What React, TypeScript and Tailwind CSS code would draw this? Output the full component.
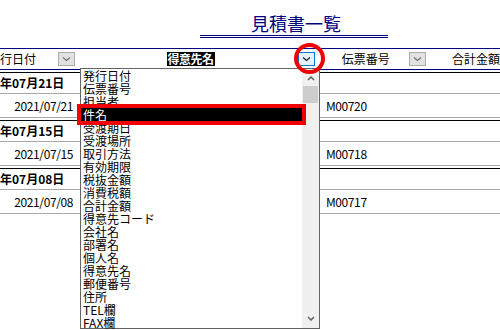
import React from 'react'

const font = "font-['Noto_Sans_CJK_JP','Noto_Sans',sans-serif]"

function Chevron({ color = '#606060' }: { color?: string }) {
  return (
    <svg width="9" height="6" viewBox="0 0 9 6" className="mt-[3px]">
      <path d="M1 1.5 L4.5 4.5 L8 1.5" fill="none" stroke={color} strokeWidth="1.2" />
    </svg>
  )
}

function SortButton({ active = false }: { active?: boolean }) {
  return (
    <div
      className={
        active
          ? 'w-[17px] h-[14px] flex items-start justify-center border border-[#0078d7] bg-[#e5f1fb]'
          : 'w-[17px] h-[14px] flex items-start justify-center border border-[#adadad] bg-[#e1e1e1]'
      }
    >
      <Chevron color={active ? '#1f1f1f' : '#707070'} />
    </div>
  )
}

const groups = [
  { day: '年07月21日', date: '2021/07/21', no: 'M00720' },
  { day: '年07月15日', date: '2021/07/15', no: 'M00718' },
  { day: '年07月08日', date: '2021/07/08', no: 'M00717' },
]

const items = [
  '発行日付',
  '伝票番号',
  '担当者',
  '件名',
  '受渡期日',
  '受渡場所',
  '取引方法',
  '有効期限',
  '税抜金額',
  '消費税額',
  '合計金額',
  '得意先コード',
  '会社名',
  '部署名',
  '個人名',
  '得意先名',
  '郵便番号',
  '住所',
  'TEL欄',
  'FAX欄',
]

export default function App() {
  return (
    <div className={`relative w-[500px] h-[330px] bg-white overflow-hidden text-black ${font}`}>
      {/* Title */}
      <div className="h-[48px] pl-[200px] pt-[13px]">
        <div className="w-[188px] h-[25px] border-b-[3px] border-double border-[#000080] flex justify-center">
          <span className="text-[18px] leading-[20px] text-[#000080] pl-[4px]">見積書一覧</span>
        </div>
      </div>

      {/* Header */}
      <div className="h-[22px] border-y border-[#000080] flex items-center text-[12px] leading-[14px]">
        <div className="w-[80px] flex items-center justify-between pr-[4px]">
          <span>行日付</span>
          <SortButton />
        </div>
        <div className="w-[240px] flex items-center pl-[88px] pr-[1px]">
          <span className="bg-black text-white font-bold px-[1px] tracking-[-0.5px]">得意先名</span>
          <div className="ml-auto">
            <SortButton active />
          </div>
        </div>
        <div className="w-[120px] flex items-center pl-[26px] pr-[8px]">
          <span>伝票番号</span>
          <div className="ml-auto">
            <SortButton />
          </div>
        </div>
        <div className="pl-[18px] whitespace-nowrap">
          <span>合計金額</span>
        </div>
      </div>

      {/* Rows */}
      {groups.map((g) => (
        <div key={g.no} className="pt-[2px]">
          <div className="h-[22px] border-t border-b border-t-black border-b-[#a8a8a8] flex items-center">
            <span className="text-[12px] leading-[14px] font-bold">{g.day}</span>
          </div>
          <div className="h-[24px] border-b border-[#a8a8a8] flex items-center text-[12px] leading-[14px] tracking-[-0.4px]">
            <div className="w-[80px] pr-[7px] text-right">{g.date}</div>
            <div className="w-[246px]" />
            <div>{g.no}</div>
          </div>
        </div>
      ))}

      {/* Dropdown list */}
      <div className="absolute left-[80px] top-[68px] w-[240px] h-[261px] border border-[#646464] bg-white flex">
        <div className="w-[221px] flex flex-col text-[12px] leading-[13px]">
          {items.map((it, i) => (
            <div
              key={it}
              className={i === 3 ? 'h-[13px] pl-[2px] bg-black text-white' : 'h-[13px] pl-[2px]'}
            >
              {it}
            </div>
          ))}
        </div>
        <div className="w-[17px] bg-[#f0f0f0] flex flex-col">
          <div className="h-[17px] flex items-start justify-center pt-[7px]">
            <svg width="8" height="5" viewBox="0 0 8 5">
              <path d="M1 4 L4 1 L7 4" fill="none" stroke="#606060" strokeWidth="1.5" />
            </svg>
          </div>
          <div className="mx-[1px] h-[17px] bg-[#cdcdcd]" />
          <div className="flex-1" />
          <div className="h-[17px] flex items-start justify-center pt-[5px]">
            <svg width="8" height="5" viewBox="0 0 8 5">
              <path d="M1 1 L4 4 L7 1" fill="none" stroke="#606060" strokeWidth="1.5" />
            </svg>
          </div>
        </div>
      </div>

      {/* Annotations */}
      <div className="absolute left-[77px] top-[104px] w-[229px] h-[21px] border-4 border-[#f00000]" />
      <div className="absolute left-[294px] top-[43px] w-[31px] h-[31px] rounded-full border-4 border-[#f00000]" />
    </div>
  )
}
